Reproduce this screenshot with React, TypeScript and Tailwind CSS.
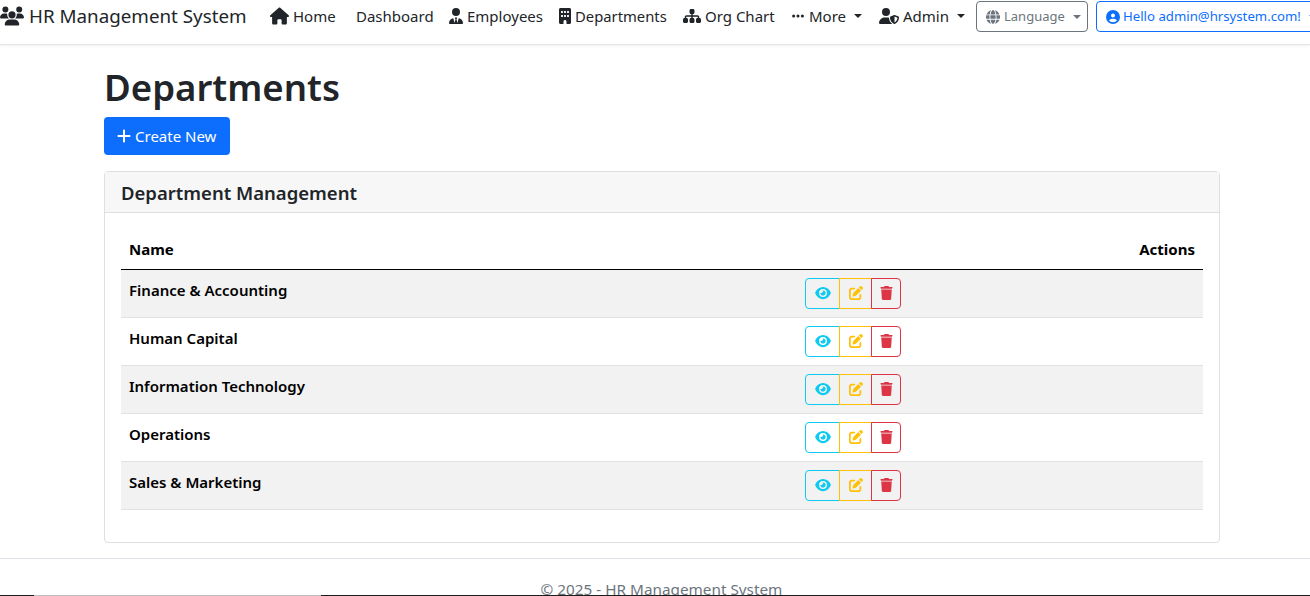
import { FaUsers, FaHouse, FaUserTie, FaBuilding, FaSitemap, FaEllipsis, FaUserShield, FaGlobe, FaCircleUser, FaPlus, FaEye, FaPenToSquare, FaTrash } from 'react-icons/fa6';

const departments = ['Finance & Accounting', 'Human Capital', 'Information Technology', 'Operations', 'Sales & Marketing'];

function Caret() {
  return <span className="ml-[8px] inline-block h-0 w-0 shrink-0 border-x-[4.8px] border-t-[4.8px] border-x-transparent border-t-current" />;
}

export default function App() {
  return (
    <div className="relative h-[596px] w-[1310px] overflow-hidden bg-white font-['Noto_Sans',sans-serif] text-[15px] text-[#212529]">
      {/* Navbar */}
      <nav className="flex h-[45px] items-center whitespace-nowrap border-b border-[#e3e4e6] pb-[12px] shadow-[0_1px_3px_rgba(0,0,0,0.06)]">
        <a className="flex w-[270px] shrink-0 items-center text-[18.8px]">
          <FaUsers className="mr-[5px] h-[20px] w-[24px] shrink-0" />
          HR Management System
        </a>
        <a className="flex w-[86px] shrink-0 items-center">
          <FaHouse className="mr-[4px] h-[18px] w-[19px] shrink-0" />
          Home
        </a>
        <a className="w-[93px] shrink-0">Dashboard</a>
        <a className="flex w-[110px] shrink-0 items-center">
          <FaUserTie className="mr-[4px] h-[16px] w-[14px] shrink-0" />
          Employees
        </a>
        <a className="flex w-[124px] shrink-0 items-center text-[14.8px]">
          <FaBuilding className="mr-[4px] h-[16px] w-[12px] shrink-0" />
          Departments
        </a>
        <a className="flex w-[108px] shrink-0 items-center">
          <FaSitemap className="mr-[4px] h-[16px] w-[18px] shrink-0" />
          Org Chart
        </a>
        <a className="flex w-[88px] shrink-0 items-center">
          <FaEllipsis className="mr-[4px] h-[14px] w-[14px] shrink-0" />
          More
          <Caret />
        </a>
        <a className="flex w-[97px] shrink-0 items-center">
          <FaUserShield className="mr-[4px] h-[16px] w-[20px] shrink-0" />
          Admin
          <Caret />
        </a>
        <button className="mr-[8px] flex h-[31px] w-[112px] shrink-0 items-center rounded border border-[#6c757d] px-[9px] pt-[1px] text-[13px] text-[#6c757d]">
          <FaGlobe className="mr-[4px] h-[14px] w-[14px] shrink-0" />
          Language
          <Caret />
        </button>
        <button className="flex h-[31px] w-[230px] shrink-0 items-center rounded border border-[#0d6efd] px-[9px] pt-[1px] text-[13.2px] text-[#0d6efd]">
          <FaCircleUser className="mr-[3px] h-[14px] w-[14px] shrink-0" />
          Hello admin@hrsystem.com!
          <Caret />
        </button>
      </nav>

      {/* Page content */}
      <main className="mx-[104px] w-[1116px]">
        <h1 className="mt-[18px] text-[36.6px] font-semibold leading-[48px]">Departments</h1>
        <button className="mt-[6px] flex h-[38px] w-[126px] items-center rounded bg-[#0d6efd] pl-[13px] text-white">
          <FaPlus className="mr-[4px] h-[16px] w-[14px] shrink-0" />
          Create New
        </button>

        <section className="mt-[16px] h-[372px] rounded border border-[#dfdfdf]">
          <header className="flex h-[41px] items-center border-b border-[#dfdfdf] bg-[#f7f7f7] px-[16px] pt-[2px] text-[18.5px] font-semibold leading-none">
            Department Management
          </header>
          <div className="px-[16px] pt-[16px]">
            <table className="w-[1082px] table-fixed border-collapse text-black">
              <colgroup>
                <col className="w-[684px]" />
                <col />
              </colgroup>
              <thead>
                <tr className="h-[40px] border-b border-black">
                  <th className="px-[8px] text-left font-bold">Name</th>
                  <th className="pr-[8px] text-right font-bold">Actions</th>
                </tr>
              </thead>
              <tbody>
                {departments.map((name, i) => (
                  <tr key={name} className={`h-[48px] border-b border-[#dee2e6] ${i % 2 === 0 ? 'bg-[#f2f2f2]' : 'bg-white'}`}>
                    <td className="px-[8px] pb-[6px] font-semibold">{name}</td>
                    <td>
                      <div className="flex">
                        <button className="flex h-[31px] w-[35px] items-center justify-center rounded-l border border-[#0dcaf0] text-[#0dcaf0]">
                          <FaEye className="h-[14px] w-[16px]" />
                        </button>
                        <button className="-ml-px flex h-[31px] w-[33px] items-center justify-center border border-[#ffc107] text-[#ffc107]">
                          <FaPenToSquare className="h-[14px] w-[14px]" />
                        </button>
                        <button className="-ml-px flex h-[31px] w-[30px] items-center justify-center rounded-r border border-[#dc3545] text-[#dc3545]">
                          <FaTrash className="h-[14px] w-[13px]" />
                        </button>
                      </div>
                    </td>
                  </tr>
                ))}
              </tbody>
            </table>
          </div>
        </section>
      </main>

      {/* Footer */}
      <footer className="mt-[15px] border-t border-[#dee2e6] pl-[13px] pt-[18px] text-center text-[15.3px] leading-[24px] text-[#6c757d]">
        © 2025 - HR Management System
      </footer>

      <div className="absolute bottom-0 left-0 flex h-px w-full bg-[#1c1c1c]">
        <div className="ml-[34px] w-[287px] bg-[#bdbdbd]" />
      </div>
    </div>
  );
}
